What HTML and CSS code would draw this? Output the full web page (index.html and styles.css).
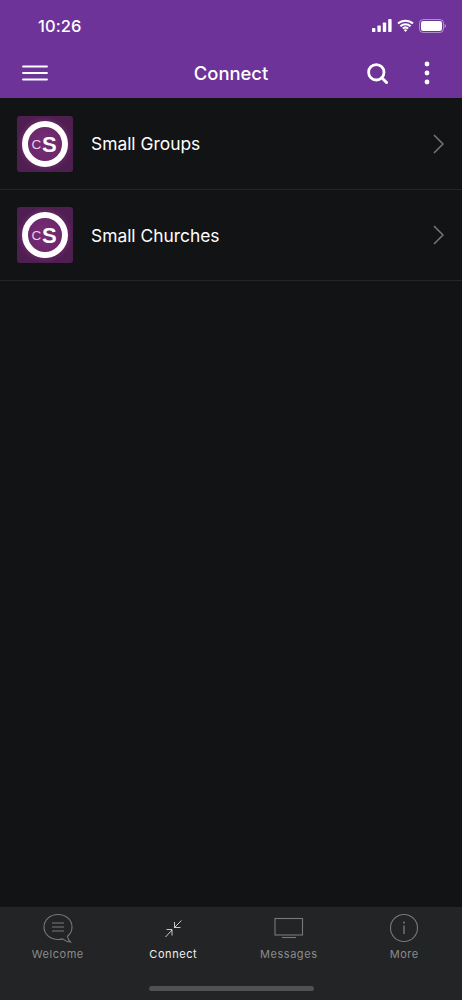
FILE: index.html
```html
<!DOCTYPE html>
<html lang="en">
<head>
<meta charset="utf-8">
<title>Connect</title>
<link rel="stylesheet" href="styles.css">
</head>
<body>
<div class="app">
  <header class="top">
    <div class="status">
      <span class="time">10:26</span>
      <div class="status-icons">
        <svg class="sig" width="20" height="13" viewBox="0 0 20 13"><rect x="0" y="9" width="3.4" height="4" rx=".8"/><rect x="5.4" y="6.5" width="3.4" height="6.5" rx=".8"/><rect x="10.8" y="3.5" width="3.4" height="9.5" rx=".8"/><rect x="16.2" y="0" width="3.4" height="13" rx=".8"/></svg>
        <svg class="wifi" width="17" height="13" viewBox="0 0 17 13"><path d="M1 4.6a11 11 0 0 1 15 0M3.4 7.2a7.5 7.5 0 0 1 10.2 0M5.8 9.6a4 4 0 0 1 5.4 0" fill="none" stroke="#fff" stroke-width="2"/><path d="M8.5 13l-1.8-2a2.6 2.6 0 0 1 3.6 0z" fill="#fff"/></svg>
        <svg class="batt" width="27" height="14" viewBox="0 0 27 14"><rect x=".5" y=".5" width="24" height="13" rx="3.6" fill="none" stroke="#fff" stroke-opacity=".45"/><rect x="2" y="2" width="21" height="10" rx="2.2" fill="#fff"/><path d="M25.6 5v4c.8-.3 1.3-1.1 1.3-2s-.5-1.7-1.3-2z" fill="#fff" fill-opacity=".5"/></svg>
      </div>
    </div>
    <nav class="bar">
      <svg class="menu" width="26" height="16" viewBox="0 0 26 16"><path d="M1 1.5h24M1 8h24M1 14.5h24" stroke="#fff" stroke-width="1.8" stroke-linecap="round"/></svg>
      <h1 class="title">Connect</h1>
      <svg class="search" width="21" height="21" viewBox="0 0 21 21"><circle cx="9.3" cy="9.3" r="7.7" fill="none" stroke="#fff" stroke-width="2.8"/><path d="M14.8 14.8l4.7 4.7" stroke="#fff" stroke-width="3" stroke-linecap="round"/></svg>
      <svg class="more" width="6" height="24" viewBox="0 0 6 24"><circle cx="3" cy="3" r="2.4" fill="#fff"/><circle cx="3" cy="12" r="2.4" fill="#fff"/><circle cx="3" cy="21" r="2.4" fill="#fff"/></svg>
    </nav>
  </header>

  <main class="list">
    <a class="row">
      <svg class="logo" width="56" height="56" viewBox="0 0 56 56"><defs><radialGradient id="g1"><stop offset="0" stop-color="#782b76"/><stop offset=".75" stop-color="#6a2768"/><stop offset="1" stop-color="#4e1f50"/></radialGradient></defs><rect width="56" height="56" rx="3" fill="url(#g1)"/><circle cx="28" cy="28" r="20" fill="none" stroke="#fff" stroke-width="6"/><text x="14.5" y="33" class="logo-c">C</text><text x="25" y="35.5" class="logo-s">S</text></svg>
      <span class="label">Small Groups</span>
      <svg class="chev" width="11" height="20" viewBox="0 0 11 20"><path d="M1 1l9 9-9 9" fill="none" stroke="#77787a" stroke-width="1.5"/></svg>
    </a>
    <a class="row">
      <svg class="logo" width="56" height="56" viewBox="0 0 56 56"><rect width="56" height="56" rx="3" fill="url(#g1)"/><circle cx="28" cy="28" r="20" fill="none" stroke="#fff" stroke-width="6"/><text x="14.5" y="33" class="logo-c">C</text><text x="25" y="35.5" class="logo-s">S</text></svg>
      <span class="label">Small Churches</span>
      <svg class="chev" width="11" height="20" viewBox="0 0 11 20"><path d="M1 1l9 9-9 9" fill="none" stroke="#77787a" stroke-width="1.5"/></svg>
    </a>
  </main>

  <footer class="tabs">
    <div class="tab">
      <svg class="tab-icon" width="30" height="30" viewBox="0 0 30 30"><path d="M15 1.5C7 1.500 1 7 1 14S7 26.500 15 26.500c1.600 0 3-.2 4.500-.6 2.500 2 5 3 8 3.100-1.600-1.200-2.800-3.200-3-5.800C27.300 21 29 17.800 29 14 29 7 23 1.500 15 1.500z" fill="none" stroke="#77787a" stroke-width="1.100"/><path d="M9 10h12M9 14h12M9 18h12" stroke="#77787a" stroke-width="1.100"/></svg>
      <span class="tab-label">Welcome</span>
    </div>
    <div class="tab active">
      <svg class="tab-icon" width="30" height="30" viewBox="0 0 30 30"><path d="M23.500 7.500L16 15M16.500 9v5.500h6M7.500 24L14 17M8.500 16.500h5.500v6" fill="none" stroke="#dcdcdc" stroke-width=".9"/></svg>
      <span class="tab-label">Connect</span>
    </div>
    <div class="tab">
      <svg class="tab-icon" width="30" height="30" viewBox="0 0 30 30"><rect x="1" y="5.500" width="27.500" height="16.500" fill="none" stroke="#77787a" stroke-width="1.100"/><path d="M8 24.500h14" stroke="#77787a" stroke-width="1.100"/></svg>
      <span class="tab-label">Messages</span>
    </div>
    <div class="tab">
      <svg class="tab-icon" width="30" height="30" viewBox="0 0 30 30"><circle cx="15" cy="15" r="13.500" fill="none" stroke="#77787a" stroke-width="1.100"/><circle cx="15" cy="9.500" r="1" fill="#77787a"/><path d="M15 12.500v8.500" stroke="#77787a" stroke-width="1.400"/></svg>
      <span class="tab-label">More</span>
    </div>
    <div class="home"></div>
  </footer>
</div>
</body>
</html>
```

FILE: styles.css
```css
* { box-sizing: border-box; }
html, body { margin: 0; padding: 0; }
body { font-family: Inter, "Liberation Sans", sans-serif; background: #121315; }
.app { width: 462px; height: 1000px; display: flex; flex-direction: column; overflow: hidden; }

.top { height: 98px; background: #6d3399; color: #fff; flex: none; }
.status { height: 48px; display: flex; align-items: center; justify-content: space-between; padding: 3px 16px 0 38px; }
.time { font-size: 16.5px; font-weight: 500; letter-spacing: .1px; }
.status-icons { display: flex; align-items: center; gap: 5px; }
.sig { fill: #fff; }
.bar { height: 50px; display: flex; align-items: center; padding: 0 32px 0 22px; position: relative; }
.menu { flex: none; }
.title { flex: 1; margin: 0; text-align: center; font-size: 18.4px; font-weight: 500; padding-left: 47px; }
.search { flex: none; margin: 0 36px 0 0; }
.more { flex: none; }

.list { flex: 1; }
.row { height: 91.5px; display: flex; align-items: center; padding: 1px 18px 0 17px; border-bottom: 1px solid #25262a; color: #fff; }
.logo { flex: none; }
.logo-c { font-family: "Liberation Sans", sans-serif; font-size: 13.5px; fill: #e8cfe6; }
.logo-s { font-family: "Liberation Sans", sans-serif; font-size: 22px; font-weight: 700; fill: #fff; }
.label { flex: 1; margin-left: 18px; font-size: 17.4px; }
.chev { flex: none; }

.tabs { height: 93px; flex: none; background: #232426; display: grid; grid-template-columns: repeat(4, 1fr); padding: 6px 0 0; position: relative; align-items: start; }
.tab { display: flex; flex-direction: column; align-items: center; gap: 3px; color: #8a8b8d; }
.tab.active { color: #f0f0f0; }
.tab-icon { display: block; }
.tab-label { font-size: 11px; font-weight: 400; letter-spacing: .55px; line-height: 16px; }
.home { position: absolute; left: 149px; bottom: 9px; width: 165px; height: 5px; border-radius: 3px; background: #505153; }
```
